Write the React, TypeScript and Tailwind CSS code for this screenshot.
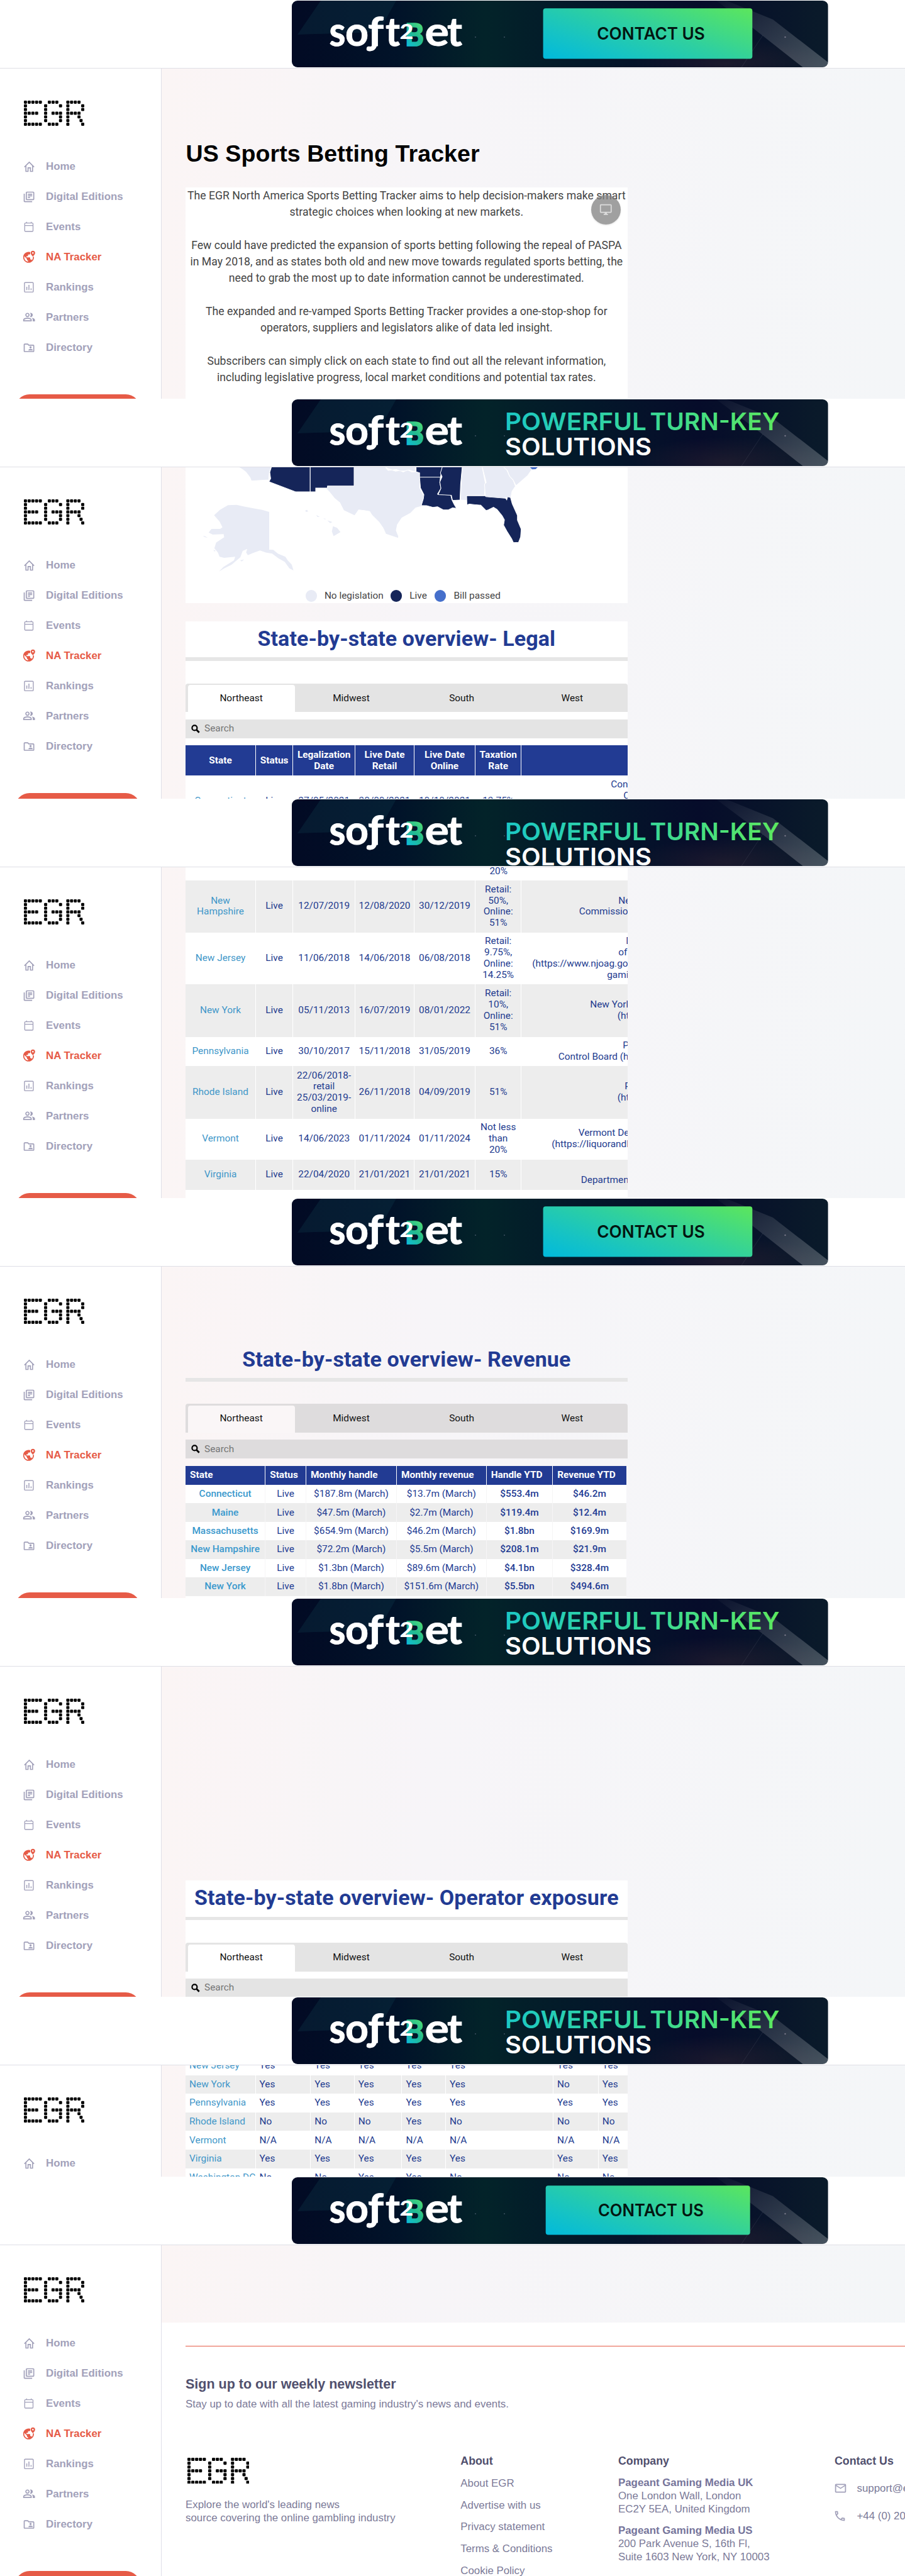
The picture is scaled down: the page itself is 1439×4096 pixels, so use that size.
import React from 'react';
import {
  MdOutlineLibraryBooks,
  MdOutlinePeopleAlt,
  MdOutlineFolderShared,
  MdOutlineEmail,
  MdOutlinePhone,
  MdOutlineDesktopWindows,
} from 'react-icons/md';

const E = ['11111', '10000', '10000', '11110', '10000', '10000', '11111'];
const G = ['01110', '10001', '10000', '10111', '10001', '10001', '01110'];
const R = ['11110', '10001', '10001', '11110', '10010', '1000h', '10001'];

function EgrLogo({ className }: { className: string }) {
  const dots: React.ReactNode[] = [];
  [E, G, R].forEach((rows, l) => {
    const x0 = [0, 32, 67.2][l];
    rows.forEach((row, y) =>
      row.split('').forEach((c, x) => {
        if (c === '0') return;
        const cx = c === 'h' ? x - 0.45 : x;
        dots.push(<rect key={`${l}-${y}-${x}`} x={x0 + cx * 5.9} y={y * 5.85} width="4.9" height="4.9" rx="1.3" />);
      }),
    );
  });
  return (
    <svg className={className} viewBox="0 0 95.7 40" preserveAspectRatio="none" fill="#000">
      {dots}
    </svg>
  );
}

function HomeIcon() {
  return (
    <svg width="17" height="18" viewBox="0 0 17 18" fill="none" stroke="currentColor" strokeWidth="1.6">
      <path d="M0.8 9.6 8.5 1.9l7.7 7.7" />
      <path d="M3.2 7.5v9h3.4v-5.6h3.8v5.6h3.4v-9" />
    </svg>
  );
}

function CalendarIcon() {
  return (
    <svg width="16" height="18" viewBox="0 0 16 18" fill="none" stroke="currentColor" strokeWidth="1.3">
      <rect x="1.3" y="2.6" width="13.2" height="13.4" rx="1.2" />
      <path d="M1.3 6.6h13.2M4.3 0.8v2M11.6 0.8v2" />
    </svg>
  );
}

function RankIcon() {
  return (
    <svg width="16" height="18" viewBox="0 0 16 18" fill="none" stroke="currentColor" strokeWidth="1.4">
      <rect x="0.9" y="1.2" width="14" height="15.2" rx="1.2" />
      <path d="M4.6 8v5.2M8 5v8.2M11.4 10.6v2.6" strokeWidth="1.5" />
    </svg>
  );
}

function SearchIcon() {
  return (
    <svg width="14" height="14" viewBox="0 0 14 14" fill="none" stroke="#000" strokeWidth="2.2">
      <circle cx="5.4" cy="5.4" r="4" />
      <path d="m8.300 8.300 4.400 4.400" strokeWidth="2.8" />
    </svg>
  );
}

function GlobePinIcon() {
  return (
    <svg width="20.6" height="20.6" viewBox="0 0 24 24" fill="currentColor">
      <path d="M18.92 12c.04.33.08.66.08 1 0 2.08-.8 3.97-2.1 5.39-.26-.81-1-1.39-1.9-1.39h-1v-3c0-.55-.45-1-1-1H7v-2h2c.55 0 1-.45 1-1V8h2c1.1 0 2-.9 2-2V3.46c-.95-.3-1.95-.46-3-.46C5.48 3 1 7.48 1 13s4.48 10 10 10 10-4.48 10-10c0-.34-.02-.67-.05-1h-2.03zM10 20.93c-3.95-.49-7-3.85-7-7.93 0-.62.08-1.21.21-1.79L8 16v1c0 1.1.9 2 2 2v1.93z" />
      <path
        fillRule="evenodd"
        d="M19 .8a4.1 4.1 0 0 0-4.1 4.1c0 2.9 4.1 6.7 4.1 6.7s4.1-3.8 4.1-6.7A4.1 4.1 0 0 0 19 .8zm0 2.6a1.5 1.5 0 1 1 0 3 1.5 1.5 0 0 1 0-3z"
      />
    </svg>
  );
}

const nav = [
  { label: 'Home', icon: <HomeIcon /> },
  { label: 'Digital Editions', icon: <MdOutlineLibraryBooks size={20.2} /> },
  { label: 'Events', icon: <CalendarIcon /> },
  { label: 'NA Tracker', icon: <GlobePinIcon />, active: true },
  { label: 'Rankings', icon: <RankIcon /> },
  { label: 'Partners', icon: <MdOutlinePeopleAlt size={20.4} /> },
  { label: 'Directory', icon: <MdOutlineFolderShared size={20.2} /> },
];

function Sidebar({ short }: { short?: boolean }) {
  const items = short ? nav.slice(0, 1) : nav;
  return (
    <aside className="w-[257px] shrink-0 overflow-hidden border-r border-[#dfdfe8] bg-white pt-[51px]">
      <EgrLogo className="ml-[38px] h-[40px] w-[96px]" />
      <nav className="mt-[41px] flex flex-col">
        {items.map((n) => (
          <div
            key={n.label}
            className={
              n.active
                ? 'flex h-[47.95px] items-center pl-[35px] text-[#e65b47]'
                : 'flex h-[47.95px] items-center pl-[35px] text-[#a2a1ba]'
            }
          >
            <span className="flex w-[22px] justify-center">{n.icon}</span>
            <span className="ml-[16px] font-['Liberation_Sans',sans-serif] text-[16.86px] font-bold">{n.label}</span>
          </div>
        ))}
      </nav>
      {!short && <div className="mt-[50.5px] ml-[23.5px] h-[46px] w-[199px] rounded-full bg-[#e65b47]" />}
    </aside>
  );
}

type BannerKind = 'contact' | 'contactSmall' | 'text' | 'textLow';

function Banner({ kind, id }: { kind: BannerKind; id: string }) {
  const glyph = (t: string, x: number, w: number) => (
    <text
      x={x}
      y="71.600"
      fontSize="64"
      fontFamily="Lato"
      fontWeight="700"
      fill="#fff"
      stroke="#fff"
      strokeWidth=".9"
      textLength={w}
      lengthAdjust="spacingAndGlyphs"
    >
      {t}
    </text>
  );
  const dy = kind === 'textLow' ? 16 : 0;
  const small = kind === 'contactSmall';
  return (
    <svg className="mt-px ml-[464px] block h-[106px] w-[852.6px] rounded-[9px]" viewBox="0 0 852.6 106" preserveAspectRatio="none">
      <defs>
        <linearGradient id={`bg${id}`} x1="0" y1="0" x2="1" y2="0">
          <stop offset="0" stopColor="#020a24" />
          <stop offset=".2" stopColor="#011329" />
          <stop offset=".36" stopColor="#032329" />
          <stop offset=".55" stopColor="#03182a" />
          <stop offset=".76" stopColor="#060c2a" />
          <stop offset="1" stopColor="#0a1b2a" />
        </linearGradient>
        <linearGradient id={`bt${id}`} gradientUnits="userSpaceOnUse" x1="402" y1="94" x2="464" y2="-82">
          <stop offset="0" stopColor="#00b9dd" />
          <stop offset=".25" stopColor="#16c3c4" />
          <stop offset=".55" stopColor="#2fd09f" />
          <stop offset="1" stopColor="#5ce65c" />
        </linearGradient>
        <linearGradient id={`tx${id}`} gradientUnits="userSpaceOnUse" x1="341" y1="0" x2="775" y2="0">
          <stop offset="0" stopColor="#1cc8c4" />
          <stop offset=".5" stopColor="#37d79a" />
          <stop offset="1" stopColor="#5ce85f" />
        </linearGradient>
        <linearGradient id={`b${id}`} x1="0.8" y1="0" x2="0.2" y2="1">
          <stop offset="0" stopColor="#5ae673" />
          <stop offset=".5" stopColor="#22b98f" />
          <stop offset="1" stopColor="#0bc0e2" />
        </linearGradient>
        <linearGradient id={`beam${id}`} x1="0" y1="0" x2="1" y2="1">
          <stop offset="0" stopColor="#fff" stopOpacity=".02" />
          <stop offset="1" stopColor="#fff" stopOpacity=".25" />
        </linearGradient>
        <radialGradient id={`gl${id}`}>
          <stop offset="0" stopColor="#2a2230" stopOpacity=".6" />
          <stop offset="1" stopColor="#2a2230" stopOpacity="0" />
        </radialGradient>
      </defs>
      <rect width="852.6" height="106" fill={`url(#bg${id})`} />
      <path d="M9 54 46 0h120l-28 50z" fill="#0d3546" opacity=".38" />
      <ellipse cx="690" cy="100" rx="150" ry="40" fill={`url(#gl${id})`} />
      <path d="M675 0h16l74 30 87.6 68v8h-40L735 45z" fill={`url(#beam${id})`} />
      <path d="m749 55-34 51" stroke="#fff" strokeOpacity=".1" strokeWidth=".8" />
      <circle cx="292" cy="58" r=".9" fill="#456" />
      <circle cx="338" cy="58" r=".9" fill="#456" />
      <circle cx="784.5" cy="58" r="1.2" fill="#778" />
      {glyph('s', 59.5, 26)}
      {glyph('o', 85, 37)}
      {glyph('f', 121, 25)}
      <path d="M132 66c0 8-3 11.500-9.500 10.500" fill="none" stroke="#fff" strokeWidth="7.500" strokeLinecap="round" />
      {glyph('t', 149, 23)}
      <text
        x="180"
        y="71.600"
        fontSize="49"
        fontFamily="Lato"
        fontWeight="900"
        fill={`url(#b${id})`}
        stroke={`url(#b${id})`}
        strokeWidth="1.500"
        textLength="30"
        lengthAdjust="spacingAndGlyphs"
      >
        B
      </text>
      <text x="171.500" y="61" fontSize="32" fontFamily="Lato" fontWeight="900" fill="#fff" textLength="22" lengthAdjust="spacingAndGlyphs">
        2
      </text>
      {glyph('e', 211.5, 38.5)}
      {glyph('t', 247, 24)}
      {kind === 'contact' || small ? (
        <g>
          <rect
            x={small ? 403.7 : 399.6}
            y={small ? 13.3 : 12.3}
            width={small ? 325 : 332.7}
            height={small ? 78.3 : 80.3}
            rx="4"
            fill={`url(#bt${id})`}
          />
          <text
            x={small ? 487 : 485.3}
            y={small ? 62.3 : 62.5}
            fontSize={small ? 26.5 : 27}
            fontFamily="Inter"
            fontWeight="600"
            fill="#031611"
            textLength={small ? 168 : 171.5}
            lengthAdjust="spacingAndGlyphs"
          >
            CONTACT US
          </text>
        </g>
      ) : (
        <g fontFamily="Inter" fontSize="38.500" fontWeight="600">
          <text x="339" y={49.3 + dy} fill={`url(#tx${id})`} textLength="225" lengthAdjust="spacingAndGlyphs">
            POWERFUL
          </text>
          <text x="569.500" y={49.3 + dy} fill={`url(#tx${id})`} textLength="206" lengthAdjust="spacingAndGlyphs">
            TURN-KEY
          </text>
          <text x="339" y={89.3 + dy} fill="#fff" textLength="233" lengthAdjust="spacingAndGlyphs">
            SOLUTIONS
          </text>
        </g>
      )}
    </svg>
  );
}

function Frame({
  height,
  kind,
  id,
  short,
  children,
}: {
  height: string;
  kind: BannerKind;
  id: string;
  short?: boolean;
  children: React.ReactNode;
}) {
  return (
    <section className={`${height} flex flex-col overflow-hidden bg-white`}>
      <header className="h-[109px] shrink-0 border-b border-[#dfdfe6] bg-white">
        <Banner kind={kind} id={id} />
      </header>
      <div className="flex min-h-0 flex-1">
        <Sidebar short={short} />
        <main className="min-w-0 flex-1 overflow-hidden bg-linear-to-r from-[#fbf5f5] via-[#f7f5f8] via-35% to-[#f4f6f8] pl-[38px]">
          {children}
        </main>
      </div>
    </section>
  );
}

function SectionTop({ title, tone }: { title: string; tone: 'white' | 'clear' }) {
  const clear = tone === 'clear';
  return (
    <div className={clear ? 'w-[702.6px]' : 'w-[702.6px] bg-white'}>
      <h2 className="flex h-[57.3px] items-center justify-center pb-[2.5px] text-[34px] font-bold tracking-[0.1px] whitespace-nowrap text-[#223b93]">
        {title}
      </h2>
      <div className="h-[5.6px] bg-[#e6e6e6]" />
      <div
        className={
          clear
            ? 'mt-[35.8px] flex h-[45.6px] rounded-t-[4px] bg-[#dedcdd]'
            : 'mt-[35.8px] flex h-[45.6px] rounded-t-[4px] bg-[#e4e4e4]'
        }
      >
        {['Northeast', 'Midwest', 'South', 'West'].map((t, i) => (
          <div key={t} className="flex flex-1 pt-[2.5px]">
            <div
              className={
                i === 0
                  ? clear
                    ? 'mr-[2px] ml-[3.5px] flex flex-1 items-center justify-center rounded-t-[4px] bg-[#faf6f7] pb-px text-[15.4px] text-[#111]'
                    : 'mr-[2px] ml-[3.5px] flex flex-1 items-center justify-center rounded-t-[4px] bg-white pb-px text-[15.4px] text-[#111]'
                  : 'flex flex-1 items-center justify-center pb-px text-[15.4px] text-[#111]'
              }
            >
              {t}
            </div>
          </div>
        ))}
      </div>
      <div
        className={
          clear
            ? 'mt-[11.3px] flex h-[30.1px] items-center bg-[#dedcdd] pl-[8.5px]'
            : 'mt-[11.3px] flex h-[30.1px] items-center bg-[#e4e4e4] pl-[8.5px]'
        }
      >
        <SearchIcon />
        <span className="ml-[7.5px] text-[15.4px] text-[#757575]">Search</span>
      </div>
      <div className="h-[11.3px]" />
    </div>
  );
}

const legalGrid = 'grid w-[702.6px] grid-cols-[112px_59.2px_99px_93.7px_97.3px_73px_168.4px] overflow-hidden';

type Line = [string, string];
type LegalRowData = { h: string; gray?: boolean; cells: string[]; agency: Line[] };

const ct: LegalRowData = {
  h: 'h-[83.2px]',
  cells: ['Connecticut', 'Live', '27/05/2021', '30/09/2021', '19/10/2021', '13.75%'],
  agency: [
    ['pl-[142px]', 'Connecticut'],
    ['pl-[162px]', 'Consumer'],
    ['pl-[170px]', 'Protection'],
    ['pl-[170px]', 'Gaming'],
  ],
};

const legalRows: LegalRowData[] = [
  {
    h: 'h-[83.3px]',
    gray: true,
    cells: ['New\nHampshire', 'Live', '12/07/2019', '12/08/2020', '30/12/2019', 'Retail:\n50%,\nOnline:\n51%'],
    agency: [
      ['pl-[154px]', 'New Hampshire'],
      ['pl-[91.5px]', 'Commission'],
    ],
  },
  {
    h: 'h-[82.4px]',
    cells: ['New Jersey', 'Live', '11/06/2018', '14/06/2018', '06/08/2018', 'Retail:\n9.75%,\nOnline:\n14.25%'],
    agency: [
      ['pl-[166px]', 'Division'],
      ['pl-[154px]', 'of Gaming'],
      ['pl-[17px]', '(https://www.njoag.gov'],
      ['pl-[136px]', 'gaming'],
    ],
  },
  {
    h: 'h-[83.2px]',
    gray: true,
    cells: ['New York', 'Live', '05/11/2013', '16/07/2019', '08/01/2022', 'Retail:\n10%,\nOnline:\n51%'],
    agency: [
      ['pl-[109px]', 'New York State'],
      ['pl-[152.5px]', '(https://'],
    ],
  },
  {
    h: 'h-[46.8px]',
    cells: ['Pennsylvania', 'Live', '30/10/2017', '15/11/2018', '31/05/2019', '36%'],
    agency: [
      ['pl-[161px]', 'Pennsylvania'],
      ['pl-[58.5px]', 'Control Board (https://'],
    ],
  },
  {
    h: 'h-[83.7px]',
    gray: true,
    cells: ['Rhode Island', 'Live', '22/06/2018-\nretail\n25/03/2019-\nonline', '26/11/2018', '04/09/2019', '51%'],
    agency: [
      ['pl-[164px]', 'Rhode Island'],
      ['pl-[152.5px]', '(https://'],
    ],
  },
  {
    h: 'h-[64.4px]',
    cells: ['Vermont', 'Live', '14/06/2023', '01/11/2024', '01/11/2024', 'Not less\nthan\n20%'],
    agency: [
      ['pl-[90.5px]', 'Vermont Department'],
      ['pl-[48px]', '(https://liquorandlottery'],
    ],
  },
  {
    h: 'h-[48.1px]',
    gray: true,
    cells: ['Virginia', 'Live', '22/04/2020', '21/01/2021', '21/01/2021', '15%'],
    agency: [
      ['pl-[170px]', 'Virginia'],
      ['pl-[94.5px]', 'Department of'],
    ],
  },
];

function LegalRow({ row }: { row: LegalRowData }) {
  return (
    <div className={`${legalGrid} ${row.h} ${row.gray ? 'bg-[#ededed]' : 'bg-white'} shrink-0 text-[15.4px] leading-[17.9px] text-[#223b8f]`}>
      {row.cells.map((c, i) => (
        <div
          key={i}
          className={
            i === 0
              ? 'flex items-center justify-center border-r border-white text-center whitespace-pre text-[#3f97c9]'
              : 'flex items-center justify-center border-r border-white text-center whitespace-pre'
          }
        >
          {c}
        </div>
      ))}
      <div className="flex min-w-0 flex-col justify-center overflow-hidden whitespace-nowrap">
        {row.agency.map(([pad, t], i) => (
          <span key={i} className={pad}>
            {t}
          </span>
        ))}
      </div>
    </div>
  );
}

const revenueGrid = 'grid grid-cols-[127.2px_64.7px_144.1px_142.7px_105.5px_116.6px]';
const revenue = [
  ['Connecticut', 'Live', '$187.8m (March)', '$13.7m (March)', '$553.4m', '$46.2m'],
  ['Maine', 'Live', '$47.5m (March)', '$2.7m (March)', '$119.4m', '$12.4m'],
  ['Massachusetts', 'Live', '$654.9m (March)', '$46.2m (March)', '$1.8bn', '$169.9m'],
  ['New Hampshire', 'Live', '$72.2m (March)', '$5.5m (March)', '$208.1m', '$21.9m'],
  ['New Jersey', 'Live', '$1.3bn (March)', '$89.6m (March)', '$4.1bn', '$328.4m'],
  ['New York', 'Live', '$1.8bn (March)', '$151.6m (March)', '$5.5bn', '$494.6m'],
];

const exposure = [
  ['New Jersey', 'Yes', 'Yes', 'Yes', 'Yes', 'Yes', 'Yes', 'Yes'],
  ['New York', 'Yes', 'Yes', 'Yes', 'Yes', 'Yes', 'No', 'Yes'],
  ['Pennsylvania', 'Yes', 'Yes', 'Yes', 'Yes', 'Yes', 'Yes', 'Yes'],
  ['Rhode Island', 'No', 'No', 'No', 'Yes', 'No', 'No', 'No'],
  ['Vermont', 'N/A', 'N/A', 'N/A', 'N/A', 'N/A', 'N/A', 'N/A'],
  ['Virginia', 'Yes', 'Yes', 'Yes', 'Yes', 'Yes', 'Yes', 'Yes'],
  ['Washington DC', 'No', 'No', 'Yes', 'Yes', 'No', 'No', 'No'],
];

function UsMap() {
  return (
    <svg className="block h-[200.8px] w-[702.6px]" viewBox="643 276 1531 480" preserveAspectRatio="none">
      <g fill="#e8ebf5" stroke="#fff" strokeWidth="2.2" strokeLinejoin="round">
        <path d="M818 270l22 14 12 10 14 20 5 14 60-4 2-24 8-30z" />
        <path d="M1227 270h104l14 18 12-2 14 5 16-3 10 6 16-8 14 8 20-2 8 4v60l14 28-2 18-6 22-20 6-18 20-30 18-16 26-4 22 8 22 0 8-44-16-10-24-14-22-24-26-8-14-20-4-18-2-14 22-38-20-14-30-18-16-16-22-28-32h92z" />
        <path d="M1602 270h68l12 68-3 40 2 4-64 2 2 18-24-2z" />
        <path d="M1670 270h72l14 16 10 24 12 14 8 24-12 20-4 24-18 0-4 6-66-6-3-52 6-6z" />
        <path d="M1740 270h94l14 8-10 14-10 16-40 38-10-22-12-14-8-22z" />
        <path d="M1331 270h108v22l-10-2-12-4-16 4-14 0-14-6-14 2-16-6z" />
      </g>
      <g fill="#152559" stroke="#fff" strokeWidth="2.2">
        <path d="M942 270h133v99h-51l-92-38 6-12-3-24z" />
        <path d="M1075 270h152v77h-92l-1 8h-40v14h-19z" />
        <path d="M1442 270h92l-8 44h-72v-17l-12-4z" />
        <path d="M1454 314h72l-2 20 4 22-12 22 46 4 4 18 8 18 8 14-14-2-14 8h-18l-20-12-16 2-22-6-18-1 7-25 2-16-12-26z" />
        <path d="M1534 270h68l-6 72-2 58-26 2-4-20-46-2 10-24-4-24 8-20-6-14z" />
        <path d="M1617 384h64l3 4 68 6 4 6 3-12 10 3 6 24 18 44v18l13 34-2 30-7 20-18 1-6-14-16-28-12-24 3-20-8-16-18-24-12-8-18 10-8 2-18-20-20-2-20-2-8 3z" />
      </g>
      <path d="M1836 275h28l-8 8-12 1z" fill="#456fcb" />
      <g fill="#e8ebf5">
        <path d="M742 458l20-20 28-18 30-1 24 6 40 8 25 5 24 8v143l14 1 16 14 26 12 8 14 14 16 6 22-14-8-16-24-22-14-22-18-22-4-20-8-24 10-18 8-6-10 4-14-16 8-8 24-30 28-26 14-18 12 16-18 36-24 4-14-38 4-16-4-6-16-12-16 6-22 28-20-2-12-38 2-14-8 10-14 30 0 8-6-10-22z" />
        <path d="M702 538l8 0 10 6-8-2zM832 630l14-4-8 8zM740 590l8 4-6 2zM1058 440l6-2 4 6-8 2zM1096 457l12 8-8 0zM1120 470l10 2-4 2zM1134 478l18 6-8 4zM1154 500l14 6 12 16-24 16-6-18z" />
      </g>
    </svg>
  );
}

function LegendItem({ color, gap, label }: { color: string; gap: string; label: string }) {
  return (
    <div className="flex items-center">
      <span className={`size-[18.4px] rounded-full ${color}`} />
      <span className={gap}>{label}</span>
    </div>
  );
}

export default function App() {
  return (
    <div className="h-[4096px] w-[1439px] overflow-hidden bg-white font-['Roboto',sans-serif]">
      <Frame height="h-[634px]" kind="contact" id="a">
        <h1 className="h-[190.4px] pt-[112.500px] pl-[0.5px] font-['Liberation_Sans',sans-serif] text-[37.5px] leading-[44px] font-bold tracking-[0.1px] text-black">
          US Sports Betting Tracker
        </h1>
        <div className="relative h-[340px] w-[702.6px] bg-white text-center text-[17.65px] leading-[26.3px] whitespace-nowrap text-[#444]">
          <p className="-mt-[1.500px]">
            The EGR North America Sports Betting Tracker aims to help decision-makers make smart
            <br />
            strategic choices when looking at new markets.
            <br />
            <br />
            Few could have predicted the expansion of sports betting following the repeal of PASPA
            <br />
            in May 2018, and as states both old and new move towards regulated sports betting, the
            <br />
            need to grab the most up to date information cannot be underestimated.
            <br />
            <br />
            The expanded and re-vamped Sports Betting Tracker provides a one-stop-shop for
            <br />
            operators, suppliers and legislators alike of data led insight.
            <br />
            <br />
            Subscribers can simply click on each state to find out all the relevant information,
            <br />
            including legislative progress, local market conditions and potential tax rates.
          </p>
          <div className="absolute top-[12px] right-[11px] flex size-[46.8px] items-center justify-center rounded-full bg-[#808080]/75 text-[#dcdcdc] shadow-sm">
            <MdOutlineDesktopWindows size={20.5} />
          </div>
        </div>
      </Frame>

      <Frame height="h-[636px]" kind="text" id="b">
        <div className="h-[216.400px] w-[702.6px] bg-white">
          <UsMap />
          <div className="-mt-[8px] flex items-center pl-[190.500px] text-[15.4px] text-[#444]">
            <LegendItem color="bg-[#e8ebf5]" gap="ml-[12px] w-[105px]" label="No legislation" />
            <LegendItem color="bg-[#152559]" gap="ml-[12px] w-[39.800px]" label="Live" />
            <LegendItem color="bg-[#456fcb]" gap="ml-[12px]" label="Bill passed" />
          </div>
        </div>
        <div className="h-[28.800px]" />
        <SectionTop title="State-by-state overview- Legal" tone="white" />
        <div className={`${legalGrid} h-[47.7px] bg-[#223b93] text-[15.4px] leading-[18px] font-bold text-white`}>
          {['State', 'Status', 'Legalization\nDate', 'Live Date\nRetail', 'Live Date\nOnline', 'Taxation\nRate'].map((t) => (
            <div key={t} className="flex items-center justify-center border-r border-white text-center whitespace-pre">
              {t}
            </div>
          ))}
        </div>
        <LegalRow row={ct} />
      </Frame>

      <Frame height="h-[635px]" kind="textLow" id="c">
        <div className={`${legalGrid} h-[20.800px] items-start bg-white text-[15.4px] leading-[12.500px] text-[#223b8f]`}>
          <span className="col-start-6 text-center">20%</span>
        </div>
        {legalRows.map((r) => (
          <LegalRow key={r.cells[0]} row={r} />
        ))}
        <div className="h-[20px] w-[702.6px] bg-white" />
      </Frame>

      <Frame height="h-[636px]" kind="contact" id="d">
        <div className="h-[119.800px]" />
        <SectionTop title="State-by-state overview- Revenue" tone="clear" />
        <div className={`${revenueGrid} h-[30.1px] w-[700.8px] bg-[#223b93] text-[15.4px] font-bold text-white`}>
          {['State', 'Status', 'Monthly handle', 'Monthly revenue', 'Handle YTD', 'Revenue YTD'].map((t) => (
            <div key={t} className="flex items-center border-r border-white pl-[7px] whitespace-nowrap last:border-r-0">
              {t}
            </div>
          ))}
        </div>
        {revenue.map((r, ri) => (
          <div
            key={r[0]}
            className={`${revenueGrid} h-[29.480px] w-[700.8px] text-[15.4px] text-[#223b93] ${ri % 2 ? 'bg-[#ededed]' : 'bg-white'}`}
          >
            {r.map((c, i) => (
              <div
                key={i}
                className={
                  i === 0
                    ? 'flex items-center justify-center border-r border-[#f6f5f6] font-medium text-[#3a99cd]'
                    : i > 3
                      ? 'flex items-center justify-center border-r border-[#f6f5f6] font-medium last:border-r-0'
                      : 'flex items-center justify-center border-r border-[#f6f5f6]'
                }
              >
                {c}
              </div>
            ))}
          </div>
        ))}
        <div className="h-[10px] w-[700.8px] bg-white" />
      </Frame>

      <Frame height="h-[634px]" kind="text" id="e">
        <div className="h-[340.400px]" />
        <SectionTop title="State-by-state overview- Operator exposure" tone="white" />
      </Frame>

      <Frame height="h-[286px]" kind="text" id="f" short>
        <div className="-mt-[14px] w-[702.6px]">
          {exposure.map((r, ri) => (
            <div
              key={r[0]}
              className={`grid h-[29.600px] grid-cols-[111.5px_87.7px_69.6px_75.7px_69.5px_171px_71.9px_45.7px] text-[15.4px] text-[#223b8f] ${ri % 2 ? 'bg-[#ededed]' : 'bg-white'}`}
            >
              {r.map((c, i) => (
                <div
                  key={i}
                  className={
                    i === 0
                      ? 'flex items-center border-r border-white pl-[6px] whitespace-nowrap text-[#3f97c9]'
                      : 'flex items-center border-r border-white pl-[6px] last:border-r-0'
                  }
                >
                  {c}
                </div>
              ))}
            </div>
          ))}
        </div>
      </Frame>

      <Frame height="h-[635px]" kind="contactSmall" id="g">
        <div className="-ml-[38px] mt-[122.500px] h-[405px] bg-white pt-[37.500px] pl-[38px] font-['Liberation_Sans',sans-serif] text-[16.86px] text-[#7b7a98]">
          <div className="h-[1.300px] bg-[#e65b47]" />
          <h3 className="mt-[47px] text-[21.5px] leading-[26px] font-bold text-[#51506e]">Sign up to our weekly newsletter</h3>
          <p className="mt-[8.500px] leading-[20px]">Stay up to date with all the latest gaming industry's news and events.</p>
          <div className="mt-[67px] grid grid-cols-[437.300px_250.700px_344px_1fr] whitespace-nowrap">
            <div className="pt-[8px]">
              <EgrLogo className="ml-[2.500px] h-[41.600px] w-[98.600px]" />
              <p className="mt-[24px] leading-[20.700px]">
                Explore the world's leading news
                <br />
                source covering the online gambling industry
              </p>
            </div>
            <div>
              <h4 className="text-[17.8px] leading-[26px] font-bold text-[#51506e]">About</h4>
              <ul className="mt-[6px] leading-[34.700px]">
                <li>About EGR</li>
                <li>Advertise with us</li>
                <li>Privacy statement</li>
                <li>Terms &amp; Conditions</li>
                <li>Cookie Policy</li>
              </ul>
            </div>
            <div className="leading-[20.700px]">
              <h4 className="text-[17.8px] leading-[26px] font-bold text-[#51506e]">Company</h4>
              <p className="mt-[12.500px]">
                <b className="text-[#75749a]">Pageant Gaming Media UK</b>
                <br />
                One London Wall, London
                <br />
                EC2Y 5EA, United Kingdom
              </p>
              <p className="mt-[14px]">
                <b className="text-[#75749a]">Pageant Gaming Media US</b>
                <br />
                200 Park Avenue S, 16th Fl,
                <br />
                Suite 1603 New York, NY 10003
              </p>
            </div>
            <div className="overflow-hidden">
              <h4 className="text-[17.8px] leading-[26px] font-bold text-[#51506e]">Contact Us</h4>
              <p className="mt-[20px] flex h-[22px] items-center">
                <MdOutlineEmail size={21} className="-ml-px shrink-0 text-[#a2a1ba]" />
                <span className="ml-[15.500px]">support@egr.global</span>
              </p>
              <p className="mt-[22px] flex h-[22px] items-center">
                <MdOutlinePhone size={21} className="-ml-[2px] shrink-0 text-[#a2a1ba]" />
                <span className="ml-[16.500px]">+44 (0) 20 7832 6500</span>
              </p>
            </div>
          </div>
        </div>
      </Frame>
    </div>
  );
}
